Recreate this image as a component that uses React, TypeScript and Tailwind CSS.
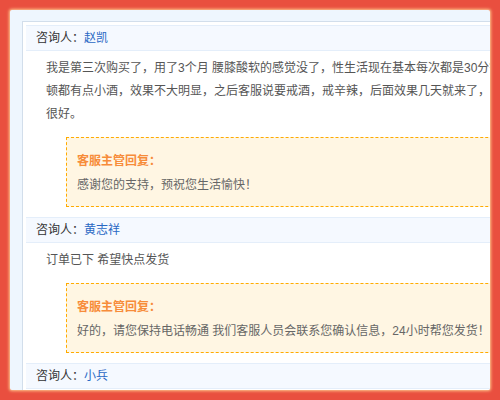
import React from 'react';

type Item = {
  name: string;
  lines: string[];
  reply?: string;
};

const items: Item[] = [
  {
    name: '赵凯',
    lines: [
      '我是第三次购买了，用了3个月 腰膝酸软的感觉没了，性生活现在基本每次都是30分钟左右，以前每',
      '顿都有点小酒，效果不大明显，之后客服说要戒酒，戒辛辣，后面效果几天就来了，现在感觉',
      '很好。',
    ],
    reply: '感谢您的支持，预祝您生活愉快！',
  },
  {
    name: '黄志祥',
    lines: ['订单已下 希望快点发货'],
    reply: '好的，请您保持电话畅通 我们客服人员会联系您确认信息，24小时帮您发货！',
  },
  {
    name: '小兵',
    lines: [],
  },
];

export default function App() {
  return (
    <div
      className="h-[400px] w-[500px] bg-[#e94f3f] p-[10px] text-[12px]"
      style={{ fontFamily: '"Liberation Sans", "Noto Sans CJK SC", sans-serif' }}
    >
      <div className="h-[380px] w-[480px] overflow-hidden rounded-[2px] bg-[#eef6fe] pl-[12px] pt-[11px] shadow-[0_0_3px_1px_#ffc98f]">
        <div className="w-[600px] border border-[#d2deeb] bg-white p-[3px]">
          {items.map(item => (
            <div key={item.name}>
              <div className="h-[26px] border-y border-[#e4eefa] bg-[#f5f9ff] pl-[10px] leading-[24px] text-[#333]">
                咨询人：<span className="text-[#2a68c4]">{item.name}</span>
              </div>
              {item.lines.length > 0 && (
                <div className="pl-[20px] pt-[6px] leading-[23px] text-[#555]">
                  {item.lines.map(line => (
                    <div key={line} className="whitespace-nowrap">{line}</div>
                  ))}
                </div>
              )}
              {item.reply && (
                <div className="mb-[10px] ml-[40px] mt-[11px] border border-dashed border-[#ffab00] bg-[#fff6e3] pb-[9px] pl-[10px] pt-[11px] leading-[24px]">
                  <div className="font-bold text-[#f78c3a]">客服主管回复：</div>
                  <div className="whitespace-nowrap text-[#666]">{item.reply}</div>
                </div>
              )}
            </div>
          ))}
        </div>
      </div>
    </div>
  );
}
